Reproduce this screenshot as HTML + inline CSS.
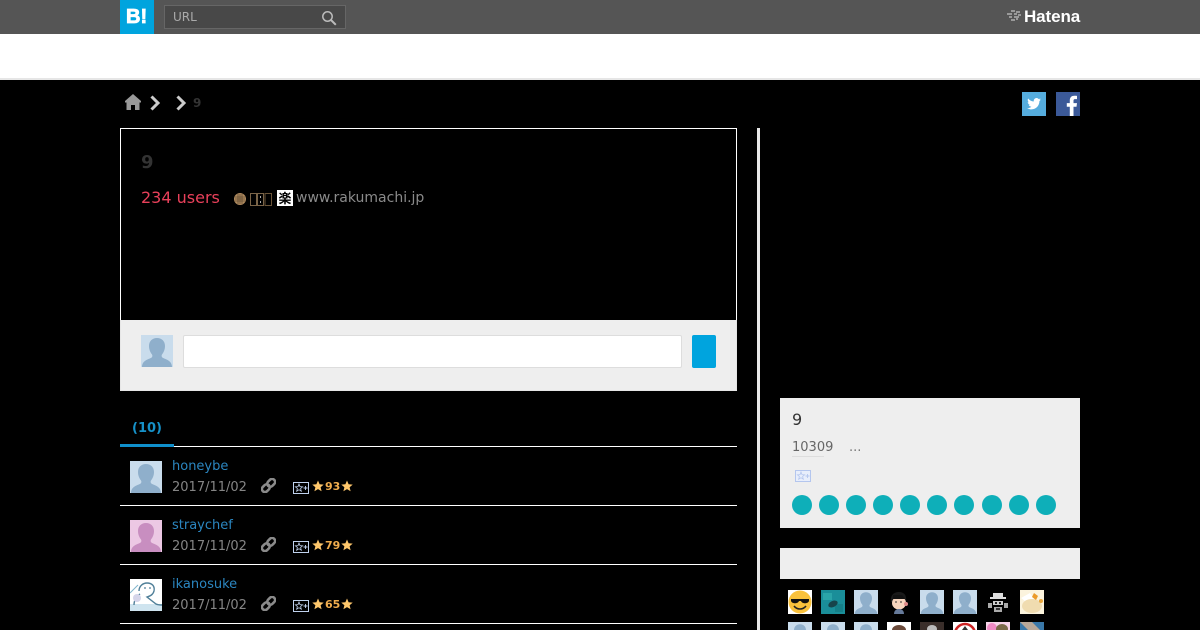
<!DOCTYPE html>
<html><head><meta charset="utf-8">
<style>
html,body{margin:0;padding:0;background:#000;width:1200px;height:630px;overflow:hidden}
body{position:relative;font-family:"DejaVu Sans","Liberation Sans","Noto Sans CJK JP",sans-serif}
.a{position:absolute;white-space:nowrap}
svg{position:absolute;display:block}
.hr{position:absolute;left:120px;width:617px;height:1px;background:#fff}
.n{font-size:13px;line-height:16px;color:#2b86c0;left:172px}
.d{font-size:13px;line-height:16px;color:#858585;left:172px}
.c{font-size:11px;font-weight:bold;line-height:14px;color:#f0ad4e;left:325px}
.dot{position:absolute;top:495px;width:20px;height:20px;border-radius:50%;background:#0eafb9}
</style></head><body>
<svg width="0" height="0" style="position:absolute">
<defs>
<symbol id="p" viewBox="0 0 32 32"><rect width="32" height="32" fill="#c9dcec"/><path d="M16 3c-5 0-8 3.400-8 8 0 3.400 1.300 6.400 3 8.500.6 1 .5 2.400-.5 3.100C7.500 24.300 1 25.500 1 32h30c0-6.500-6.500-7.700-9.500-9.400-1-.7-1.100-2.100-.5-3.100 1.700-2.100 3-5.100 3-8.500 0-4.600-3-8-8-8z" fill="#8fafcb"/></symbol>
<symbol id="q" viewBox="0 0 32 32"><rect width="32" height="32" fill="#ecc8e4"/><path d="M16 3c-5 0-8 3.400-8 8 0 3.400 1.300 6.400 3 8.500.6 1 .5 2.400-.5 3.100C7.500 24.300 1 25.500 1 32h30c0-6.500-6.500-7.700-9.500-9.400-1-.7-1.100-2.100-.5-3.100 1.700-2.100 3-5.100 3-8.500 0-4.600-3-8-8-8z" fill="#c88ec0"/></symbol>
<symbol id="l" viewBox="0 0 14 14"><g fill="none" stroke="#8a8a8a" stroke-width="2.400" transform="rotate(-45 7 7)"><rect x="-.5" y="4.200" width="8" height="5.600" rx="2.800"/><rect x="6.500" y="4.200" width="8" height="5.600" rx="2.800"/></g></symbol>
<symbol id="s" viewBox="0 0 16 12"><rect x=".5" y=".5" width="15" height="11" fill="none" stroke="#c0d2ee" stroke-width="1"/><path d="M6 2l1 2.600 2.600.2-2 1.700.7 2.700L6 7.700 3.700 9.200l.7-2.700-2-1.700L5 4.600z" fill="none" stroke="#c0d2ee" stroke-width=".8"/><path d="M10.500 6h4M12.500 4v4" stroke="#c0d2ee" stroke-width=".9"/></symbol>
<symbol id="t" viewBox="0 0 12 12"><path d="M6 .5l1.600 3.800 4.100.3-3.100 2.700 1 4L6 9.100 2.400 11.300l1-4L.3 4.600l4.100-.3z" fill="#ffc76b"/></symbol>
</defs></svg>

<!-- header -->
<div class="a" style="left:0;top:0;width:1200px;height:34px;background:#555"></div>
<div class="a" style="left:120px;top:0;width:34px;height:34px;background:#00a4de"></div>
<div class="a" style="left:126px;top:6px;font:bold 20px/23px 'Liberation Sans',sans-serif;color:#fff;-webkit-text-stroke:.8px #fff">B!</div>
<div class="a" style="left:164px;top:5px;width:180px;height:22px;background:#484848;border:1px solid #666"></div>
<div class="a" style="left:173px;top:10px;font-size:12px;line-height:15px;color:#aaa">URL</div>
<svg style="left:321px;top:10px" width="16" height="16" viewBox="0 0 16 16"><circle cx="6.500" cy="6.500" r="4.700" fill="none" stroke="#bbb" stroke-width="1.500"/><path d="M10 10l4.800 4.800" stroke="#bbb" stroke-width="2"/></svg>
<svg style="left:1006px;top:10px" width="16" height="12" viewBox="0 0 16 12"><path d="M5 1h4M10 2h4M1 4h5M8 4h3M12 5h3M3 7h3M8 7h5M5 10h4M10 9h2" stroke="#ddd" stroke-width="1"/></svg>
<div class="a" style="left:1024px;top:7px;font:bold 17px/19px 'Liberation Sans',sans-serif;color:#fff;letter-spacing:-.1px">Hatena</div>

<!-- white bar -->
<div class="a" style="left:0;top:34px;width:1200px;height:44px;background:#fff"></div>
<div class="a" style="left:0;top:78px;width:1200px;height:2px;background:#e6e6e6"></div>

<!-- breadcrumb -->
<svg style="left:124px;top:93px" width="18" height="18" viewBox="0 0 18 18"><path d="M9 1L1 8v1.500h1.500V17h4.500v-5h4v5h4.500V9.500H17V8z" fill="#999"/></svg>
<svg style="left:149px;top:95px" width="12" height="16" viewBox="0 0 12 16"><path d="M2.500 1.500L9 8l-6.500 6.500" fill="none" stroke="#ccc" stroke-width="3"/></svg>
<svg style="left:175px;top:95px" width="12" height="16" viewBox="0 0 12 16"><path d="M2.500 1.500L9 8l-6.500 6.500" fill="none" stroke="#ccc" stroke-width="3"/></svg>
<div class="a" style="left:193px;top:96px;font-size:12px;font-weight:bold;line-height:14px;color:#333">9</div>

<!-- social -->
<div class="a" style="left:1022px;top:92px;width:24px;height:24px;background:#55acdd"></div>
<svg style="left:1027px;top:98px" width="14" height="12" viewBox="0 0 16 14"><path d="M16 1.700c-.6.300-1.200.4-1.900.5.700-.4 1.200-1 1.400-1.800-.6.400-1.300.7-2.100.8C12.800.5 12 0 11 0 9.200 0 7.700 1.500 7.700 3.300c0 .3 0 .5.100.8C5.100 3.900 2.700 2.600 1.100.6.800 1.100.700 1.700.700 2.300c0 1.100.6 2.100 1.500 2.700-.5 0-1-.2-1.500-.4 0 1.600 1.100 2.900 2.600 3.200-.5.100-1 .2-1.500.1.400 1.300 1.600 2.200 3.100 2.300C3.700 11.300 2 11.900.8 11.800H0C1.500 12.700 3.200 13.300 5 13.300c6 0 9.300-5 9.300-9.300v-.4c.7-.5 1.200-1.100 1.700-1.900z" fill="#fff"/></svg>
<div class="a" style="left:1056px;top:92px;width:24px;height:24px;background:#3b5998;overflow:hidden"></div>
<svg style="left:1056px;top:92px" width="24" height="24" viewBox="0 0 24 24"><path d="M17.500 24v-9.300h3l.5-3.600h-3.500V8.800c0-1 .3-1.700 1.800-1.700H21V3.900c-.3 0-1.400-.1-2.700-.1-2.700 0-4.500 1.600-4.500 4.600v2.700h-3v3.600h3V24z" fill="#fff"/></svg>

<!-- entry box -->
<div class="a" style="left:120px;top:128px;width:615px;height:191px;border:1px solid #fff;border-bottom:0"></div>
<div class="a" style="left:141px;top:152px;font-size:18px;font-weight:bold;line-height:22px;color:#333">9</div>
<div class="a" style="left:141px;top:188px;font-size:16px;line-height:19px;color:#e8405a">234 users</div>
<svg style="left:234px;top:193px" width="12" height="12" viewBox="0 0 12 12"><circle cx="6" cy="6" r="6" fill="#b08a5e"/><path d="M1 4h10M1 6h10M1 8h10M4 1v10M6 1v10M8 1v10" stroke="#4a3a28" stroke-width=".6"/></svg>
<svg style="left:250px;top:193px" width="22" height="13" viewBox="0 0 22 13"><rect x=".5" y=".5" width="6" height="12" fill="none" stroke="#7a6448"/><rect x="7.500" y=".5" width="6" height="12" fill="none" stroke="#7a6448"/><rect x="15" y=".5" width="6.500" height="12" fill="none" stroke="#6a5438"/><path d="M10.500 3v2M10.500 8v2" stroke="#aaa"/></svg>
<div class="a" style="left:277px;top:190px;width:16px;height:16px;background:#fff;color:#000;font:bold 13px/16px 'Noto Sans CJK JP',sans-serif;text-align:center;overflow:hidden">楽</div>
<div class="a" style="left:296px;top:190px;font-size:14px;line-height:17px;color:#8a8a8a">www.rakumachi.jp</div>

<!-- comment form -->
<div class="a" style="left:120px;top:320px;width:615px;height:70px;background:#eee;border:1px solid #e6e6e6;border-top:0"></div>
<svg style="left:141px;top:335px" width="32" height="32"><use href="#p"/></svg>
<div class="a" style="left:183px;top:335px;width:497px;height:31px;background:#fff;border:1px solid #ddd;border-radius:2px"></div>
<div class="a" style="left:692px;top:335px;width:24px;height:33px;background:#00a4de;border-radius:2px"></div>

<!-- tab -->
<div class="a" style="left:132px;top:421px;font-size:13px;font-weight:bold;line-height:15px;color:#1691c8">(10)</div>
<div class="hr" style="top:446px"></div>
<div class="a" style="left:120px;top:444px;width:54px;height:3px;background:#0f8fcb"></div>

<!-- rows -->
<svg style="left:130px;top:461px" width="32" height="32"><use href="#p"/></svg>
<div class="a n" style="top:459px">honeybe</div>
<div class="a d" style="top:480px">2017/11/02</div>
<svg style="left:261px;top:478px" width="15" height="15"><use href="#l"/></svg>
<svg style="left:293px;top:482px" width="16" height="12"><use href="#s"/></svg>
<svg style="left:312px;top:480px" width="12" height="12"><use href="#t"/></svg>
<div class="a c" style="top:480px">93</div>
<svg style="left:341px;top:480px" width="12" height="12"><use href="#t"/></svg>
<div class="hr" style="top:505px"></div>

<svg style="left:130px;top:520px" width="32" height="32"><use href="#q"/></svg>
<div class="a n" style="top:518px">straychef</div>
<div class="a d" style="top:539px">2017/11/02</div>
<svg style="left:261px;top:537px" width="15" height="15"><use href="#l"/></svg>
<svg style="left:293px;top:541px" width="16" height="12"><use href="#s"/></svg>
<svg style="left:312px;top:539px" width="12" height="12"><use href="#t"/></svg>
<div class="a c" style="top:539px">79</div>
<svg style="left:341px;top:539px" width="12" height="12"><use href="#t"/></svg>
<div class="hr" style="top:564px"></div>

<svg style="left:130px;top:579px" width="32" height="32" viewBox="0 0 32 32"><rect width="32" height="32" fill="#fff"/><rect y="25" width="32" height="7" fill="#cfe4ef"/><path d="M0 14L8 6" stroke="#7fb5cc" stroke-width="1"/><path d="M9 12c0-5 4-8 8-8 5 0 8 3 7 8-1 4-4 5-7 6l9 7c2 1 5 1 6 1M10 15c-3 2-6 6-6 11" fill="none" stroke="#4f7f98" stroke-width="1.400"/><circle cx="7" cy="19" r="4" fill="#d5d5ea"/><path d="M15 8v2M20 8v2" stroke="#4f7f98" stroke-width="1.200"/></svg>
<div class="a n" style="top:577px">ikanosuke</div>
<div class="a d" style="top:598px">2017/11/02</div>
<svg style="left:261px;top:596px" width="15" height="15"><use href="#l"/></svg>
<svg style="left:293px;top:600px" width="16" height="12"><use href="#s"/></svg>
<svg style="left:312px;top:598px" width="12" height="12"><use href="#t"/></svg>
<div class="a c" style="top:598px">65</div>
<svg style="left:341px;top:598px" width="12" height="12"><use href="#t"/></svg>
<div class="hr" style="top:623px"></div>

<!-- vertical divider -->
<div class="a" style="left:757px;top:128px;width:3px;height:502px;background:#e8e8e8"></div>

<!-- side card -->
<div class="a" style="left:780px;top:398px;width:300px;height:130px;background:#eee"></div>
<div class="a" style="left:792px;top:410px;font-size:16px;line-height:19px;color:#333">9</div>
<div class="a" style="left:792px;top:440px;font-size:13px;line-height:16px;color:#666">10309</div>
<div class="a" style="left:792px;top:456px;width:32px;height:1px;background:#ddd"></div>
<div class="a" style="left:849px;top:440px;font-size:13px;line-height:16px;color:#777">...</div>
<svg style="left:795px;top:470px" width="16" height="12" viewBox="0 0 16 12"><rect x=".5" y=".5" width="15" height="11" fill="#e8eefb" stroke="#b4c6ee"/><path d="M6 2l1 2.600 2.600.2-2 1.700.7 2.700L6 7.700 3.700 9.200l.7-2.700-2-1.700L5 4.600z" fill="none" stroke="#b4c6ee" stroke-width=".8"/><path d="M10.500 6h4M12.500 4v4" stroke="#b4c6ee" stroke-width=".9"/></svg>
<div class="dot" style="left:792px"></div><div class="dot" style="left:819px"></div><div class="dot" style="left:846px"></div><div class="dot" style="left:873px"></div><div class="dot" style="left:900px"></div><div class="dot" style="left:927px"></div><div class="dot" style="left:954px"></div><div class="dot" style="left:982px"></div><div class="dot" style="left:1009px"></div><div class="dot" style="left:1036px"></div>

<div class="a" style="left:780px;top:548px;width:300px;height:31px;background:#eee"></div>

<!-- avatars row 1 -->
<svg style="left:788px;top:590px" width="24" height="24" viewBox="0 0 24 24"><rect width="24" height="24" fill="#fff"/><circle cx="12" cy="12" r="11.500" fill="#f9c13c"/><path d="M3 9h18v2c-1 3-7 3-8 0h-2c-1 3-7 3-8 0z" fill="#111"/><path d="M6 16c3 4 9 4 12 0" fill="none" stroke="#222" stroke-width="1.500"/></svg>
<svg style="left:821px;top:590px" width="24" height="24" viewBox="0 0 24 24"><rect width="24" height="24" fill="#1a8e99"/><rect x="2" y="3" width="9" height="7" fill="#2aa4a8"/><rect x="14" y="14" width="8" height="8" fill="#157f88"/><ellipse cx="12" cy="14" rx="5" ry="3" fill="#17434a" transform="rotate(-25 12 14)"/></svg>
<svg style="left:854px;top:590px" width="24" height="24"><use href="#p"/></svg>
<svg style="left:887px;top:590px" width="24" height="24" viewBox="0 0 24 24"><rect width="24" height="24" fill="#000"/><path d="M4 12c-1-7 3-10 8-10s8 3 7 10z" fill="#191919"/><ellipse cx="12" cy="13" rx="7" ry="6.500" fill="#f7d4bd"/><circle cx="19" cy="14" r="2" fill="#e08a8a"/><path d="M7 24c0-4 3-5 5-5s5 1 5 5z" fill="#667a9a"/><path d="M6 5h9l3 4H6z" fill="#111"/><path d="M8 12h2M13 12h2" stroke="#333"/></svg>
<svg style="left:920px;top:590px" width="24" height="24"><use href="#p"/></svg>
<svg style="left:953px;top:590px" width="24" height="24"><use href="#p"/></svg>
<svg style="left:986px;top:590px" width="24" height="24" viewBox="0 0 24 24"><rect width="24" height="24" fill="#000"/><path d="M7 3h10v4h3v2H4V7h3z" fill="#ddd"/><path d="M7 11h10v4H7z" fill="#ccc"/><path d="M9 12h2v2H9zM13 12h2v2h-2z" fill="#222"/><path d="M2 13h4v5H2zM18 13h4v5h-4zM8 17h8v5H8z" fill="#aaa"/><path d="M10 18h4v2h-4z" fill="#333"/></svg>
<svg style="left:1020px;top:590px" width="24" height="24" viewBox="0 0 24 24"><rect width="24" height="24" fill="#fbf3dd"/><path d="M1 8L10 3l4 6-5 5z" fill="#fff"/><ellipse cx="12" cy="16" rx="10" ry="7" fill="#f0dcb0"/><path d="M14 3l4 3-2 4-4-3z" fill="#eb9b2a"/><circle cx="21" cy="11" r="2" fill="#e9a63a"/></svg>

<!-- avatars row 2 (clipped) -->
<svg style="left:788px;top:622px" width="24" height="24"><use href="#p"/></svg>
<svg style="left:821px;top:622px" width="24" height="24"><use href="#p"/></svg>
<svg style="left:854px;top:622px" width="24" height="24"><use href="#p"/></svg>
<svg style="left:887px;top:622px" width="24" height="8" viewBox="0 0 24 8"><rect width="24" height="8" fill="#fff"/><ellipse cx="12" cy="8" rx="7" ry="5" fill="#6b4a3a"/></svg>
<svg style="left:920px;top:622px" width="24" height="8" viewBox="0 0 24 8"><rect width="24" height="8" fill="#3a2e2a"/><ellipse cx="12" cy="7" rx="5" ry="4" fill="#bbb"/></svg>
<svg style="left:953px;top:622px" width="24" height="8" viewBox="0 0 24 8"><rect width="24" height="8" fill="#fff"/><circle cx="12" cy="12" r="10" fill="none" stroke="#c22" stroke-width="2.500"/><path d="M9 8l3-4 3 4z" fill="#333"/></svg>
<svg style="left:986px;top:622px" width="24" height="8" viewBox="0 0 24 8"><rect width="24" height="8" fill="#f7d5ea"/><circle cx="6" cy="6" r="5" fill="#f08ac5"/><ellipse cx="16" cy="7" rx="6" ry="5" fill="#7b6a4a"/></svg>
<svg style="left:1020px;top:622px" width="24" height="8" viewBox="0 0 24 8"><rect width="24" height="8" fill="#3a78a8"/><path d="M0 0h12l8 8H8z" fill="#b8a898"/></svg>
</body></html>
